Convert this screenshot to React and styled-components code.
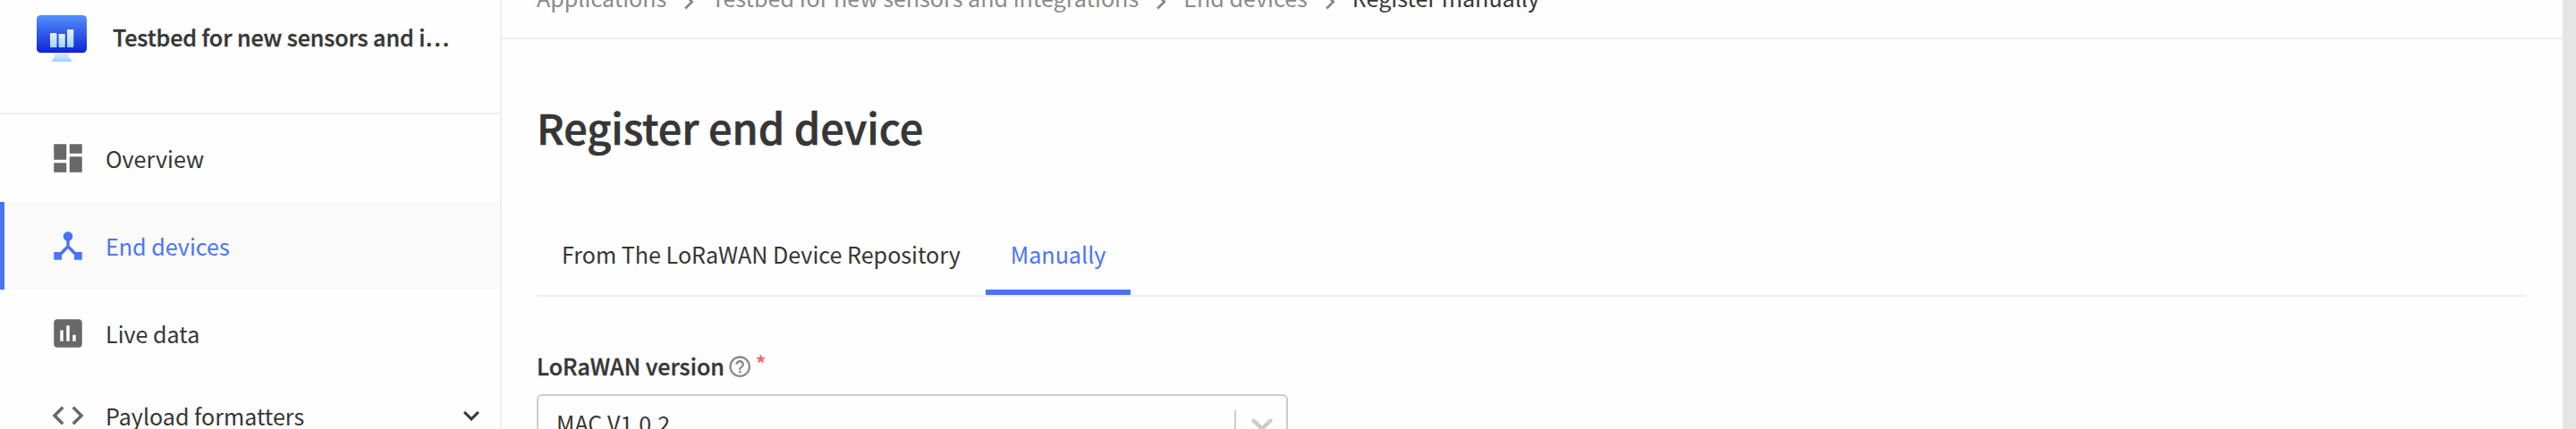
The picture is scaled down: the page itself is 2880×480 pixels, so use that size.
import React from 'react';
import styled, { createGlobalStyle } from 'styled-components';

const GlobalStyle = createGlobalStyle`
  *, *::before, *::after { box-sizing: border-box; }
  body {
    margin: 0;
    overflow: hidden;
    background: #fefefe;
    color: #363636;
    font-family: "Noto Sans CJK SC", "Noto Sans", sans-serif;
    font-size: 25.1px;
    line-height: 36px;
  }
`;

const Page = styled.div`
  display: flex;
  height: 480px;
  overflow: hidden;
`;

const Sidebar = styled.aside`
  display: flex;
  flex-direction: column;
  flex: 0 0 561px;
  border-right: 2px solid #eee;
`;

const SidebarHeader = styled.header`
  display: flex;
  align-items: flex-start;
  flex: 0 0 128px;
  padding: 17px 0 0 41px;
  border-bottom: 2px solid #eee;
`;

const AppLogo = styled.svg`
  display: block;
  width: 56px;
  height: 52px;
`;

const AppName = styled.div`
  margin: 6px 0 0 29px;
  font-weight: 500;
  letter-spacing: -0.11px;
  -webkit-text-stroke: 0.35px;
  white-space: nowrap;
`;

const NavItem = styled.a`
  display: flex;
  align-items: center;
  flex: 0 0 ${(p) => (p.$group ? 86 : 98)}px;
  padding: 0 14px 0 50px;
  border-left: 5px solid ${(p) => (p.$active ? '#4a73fb' : 'transparent')};
  background: ${(p) => (p.$active ? '#fafafa' : 'transparent')};
  color: ${(p) => (p.$active ? '#4a73fb' : '#363636')};
  white-space: nowrap;
`;

const NavIcon = styled.svg`
  flex: none;
  width: 42px;
  height: 42px;
  margin-right: 21px;
  fill: ${(p) => (p.$active ? '#4a73fb' : '#686868')};
`;

const ExpandIcon = styled.svg`
  width: 36px;
  height: 36px;
  margin-left: auto;
  fill: #363636;
`;

const Main = styled.main`
  display: flex;
  flex-direction: column;
  flex: 1;
  min-width: 0;
`;

const Breadcrumbs = styled.nav`
  display: flex;
  align-items: flex-start;
  margin-top: -21px;
  padding: 0 0 27px 39px;
  border-bottom: 2px solid #eee;
  white-space: nowrap;
`;

const Crumb = styled.span`
  color: ${(p) => (p.$current ? '#363636' : '#8a8a8a')};
`;

const CrumbSeparator = styled.svg`
  width: 34px;
  height: 34px;
  margin: 6px 8px -6px;
  fill: #8a8a8a;
`;

const Content = styled.section`
  display: flex;
  flex-direction: column;
  padding: 64px 41px 0 39px;
`;

const Title = styled.h1`
  margin: 0;
  font-size: 46.8px;
  font-weight: 500;
  line-height: 68px;
  -webkit-text-stroke: 0.6px;
`;

const Tabs = styled.div`
  display: flex;
  margin-top: 90px;
  border-bottom: 2px solid #eee;
`;

const Tab = styled.div`
  padding: 0 28px 22px;
  border-bottom: 6px solid ${(p) => (p.$active ? '#4a73fb' : 'transparent')};
  color: ${(p) => (p.$active ? '#4a73fb' : '#363636')};
`;

const Label = styled.label`
  display: flex;
  align-items: center;
  height: 36px;
  margin-top: 59px;
  font-weight: 500;
  -webkit-text-stroke: 0.35px;
`;

const HelpIcon = styled.svg`
  width: 28.4px;
  height: 28.4px;
  margin: 2px 0 0 3px;
  fill: #8a8a8a;
`;

const Required = styled.span`
  margin-left: 3px;
  padding-bottom: 7px;
  color: #f2645c;
  -webkit-text-stroke: 0;
`;

const Select = styled.div`
  display: flex;
  align-items: center;
  width: 840px;
  height: 66px;
  margin-top: 14px;
  padding-left: 20px;
  border: 2px solid #ccc;
  border-radius: 6px;
`;

const SelectValue = styled.span`
  flex: 1;
  padding-bottom: 3px;
`;

const SelectDivider = styled.span`
  align-self: stretch;
  width: 2px;
  margin: 16px 9px 16px 0;
  background: #ccc;
`;

const SelectArrow = styled.svg`
  width: 40px;
  height: 40px;
  margin-right: 7px;
  fill: #ccc;
`;

const Scrollbar = styled.div`
  flex: 0 0 15px;
  background: #e5e5e5;
`;

const ICONS = {
  overview: 'M3 13h8V3H3v10zm0 8h8v-6H3v6zm10 0h8V11h-8v10zm0-18v6h8V3h-8z',
  devices:
    'M17 16l-4-4V8.82C14.16 8.4 15 7.3 15 6c0-1.66-1.34-3-3-3S9 4.34 9 6c0 1.3.84 2.4 2 2.82V12l-4 4H3v5h5v-3.05l4-4.2 4 4.2V21h5v-5h-4z',
  data: 'M19 3H5c-1.1 0-2 .9-2 2v14c0 1.1.9 2 2 2h14c1.1 0 2-.9 2-2V5c0-1.1-.9-2-2-2zM9 17H7v-7h2v7zm4 0h-2V7h2v10zm4 0h-2v-4h2v4z',
  code: 'M9.4 16.6L4.8 12l4.6-4.6L8 6l-6 6 6 6 1.4-1.4zm5.2 0l4.6-4.6-4.6-4.6L16 6l6 6-6 6-1.4-1.4z',
};

const NAV = [
  { label: 'Overview', icon: ICONS.overview },
  { label: 'End devices', icon: ICONS.devices, active: true },
  { label: 'Live data', icon: ICONS.data },
  { label: 'Payload formatters', icon: ICONS.code, group: true },
];

const CRUMBS = [
  'Applications',
  'Testbed for new sensors and integrations',
  'End devices',
  'Register manually',
];

function Logo() {
  return (
    <AppLogo viewBox="0 0 56 52">
      <defs>
        <linearGradient id="screen" x1="0" y1="0" x2="0" y2="1">
          <stop offset="0" stopColor="#528ffa" />
          <stop offset="1" stopColor="#0d24d6" />
        </linearGradient>
        <linearGradient id="pale" x1="0" y1="0" x2="0" y2="1">
          <stop offset="0" stopColor="#e8f3ff" />
          <stop offset="1" stopColor="#9fd0ff" />
        </linearGradient>
      </defs>
      <path d="M20 41h16v7h1.5q1.500 1 1.500 4H17q0-3 1.500-4H20z" fill="url(#pale)" />
      <rect width="56" height="42" rx="4.500" fill="url(#screen)" />
      <rect x="15" y="20" width="7.500" height="16" rx="0.700" fill="url(#pale)" />
      <rect x="24.500" y="21" width="7.300" height="15" rx="0.700" fill="url(#pale)" />
      <rect x="34" y="16" width="7.300" height="20" rx="0.700" fill="url(#pale)" />
    </AppLogo>
  );
}

export default function App() {
  return (
    <>
      <GlobalStyle />
      <Page>
        <Sidebar>
          <SidebarHeader>
            <Logo />
            <AppName>Testbed for new sensors and i…</AppName>
          </SidebarHeader>
          {NAV.map((item) => (
            <NavItem key={item.label} $active={item.active} $group={item.group}>
              <NavIcon viewBox="0 0 24 24" $active={item.active}>
                <path d={item.icon} />
              </NavIcon>
              {item.label}
              {item.group && (
                <ExpandIcon viewBox="0 0 24 24">
                  <path d="M16.590 8.590L12 13.170 7.410 8.590 6 10l6 6 6-6z" />
                </ExpandIcon>
              )}
            </NavItem>
          ))}
        </Sidebar>
        <Main>
          <Breadcrumbs>
            {CRUMBS.map((crumb, i) => (
              <React.Fragment key={crumb}>
                {i > 0 && (
                  <CrumbSeparator viewBox="0 0 24 24">
                    <path d="M10 6L8.590 7.410 13.170 12l-4.580 4.590L10 18l6-6z" />
                  </CrumbSeparator>
                )}
                <Crumb $current={i === CRUMBS.length - 1}>{crumb}</Crumb>
              </React.Fragment>
            ))}
          </Breadcrumbs>
          <Content>
            <Title>Register end device</Title>
            <Tabs>
              <Tab>From The LoRaWAN Device Repository</Tab>
              <Tab $active>Manually</Tab>
            </Tabs>
            <Label>
              LoRaWAN version
              <HelpIcon viewBox="0 0 24 24">
                <path d="M11 18h2v-2h-2v2zm1-16C6.480 2 2 6.480 2 12s4.480 10 10 10 10-4.480 10-10S17.520 2 12 2zm0 18c-4.410 0-8-3.590-8-8s3.590-8 8-8 8 3.590 8 8-3.590 8-8 8zm0-14c-2.210 0-4 1.790-4 4h2c0-1.100.9-2 2-2s2 .9 2 2c0 2-3 1.750-3 5h2c0-2.250 3-2.500 3-5 0-2.210-1.790-4-4-4z" />
              </HelpIcon>
              <Required>*</Required>
            </Label>
            <Select>
              <SelectValue>MAC V1.0.2</SelectValue>
              <SelectDivider />
              <SelectArrow viewBox="0 0 20 20">
                <path d="M4.516 7.548c0.436-0.446 1.043-0.481 1.576 0l3.908 3.747 3.908-3.747c0.533-0.481 1.141-0.446 1.574 0 0.436 0.445 0.408 1.197 0 1.615-0.406 0.418-4.695 4.502-4.695 4.502-0.217 0.223-0.502 0.335-0.787 0.335s-0.570-0.112-0.789-0.335c0 0-4.287-4.084-4.695-4.502s-0.436-1.170 0-1.615z" />
              </SelectArrow>
            </Select>
          </Content>
        </Main>
        <Scrollbar />
      </Page>
    </>
  );
}
